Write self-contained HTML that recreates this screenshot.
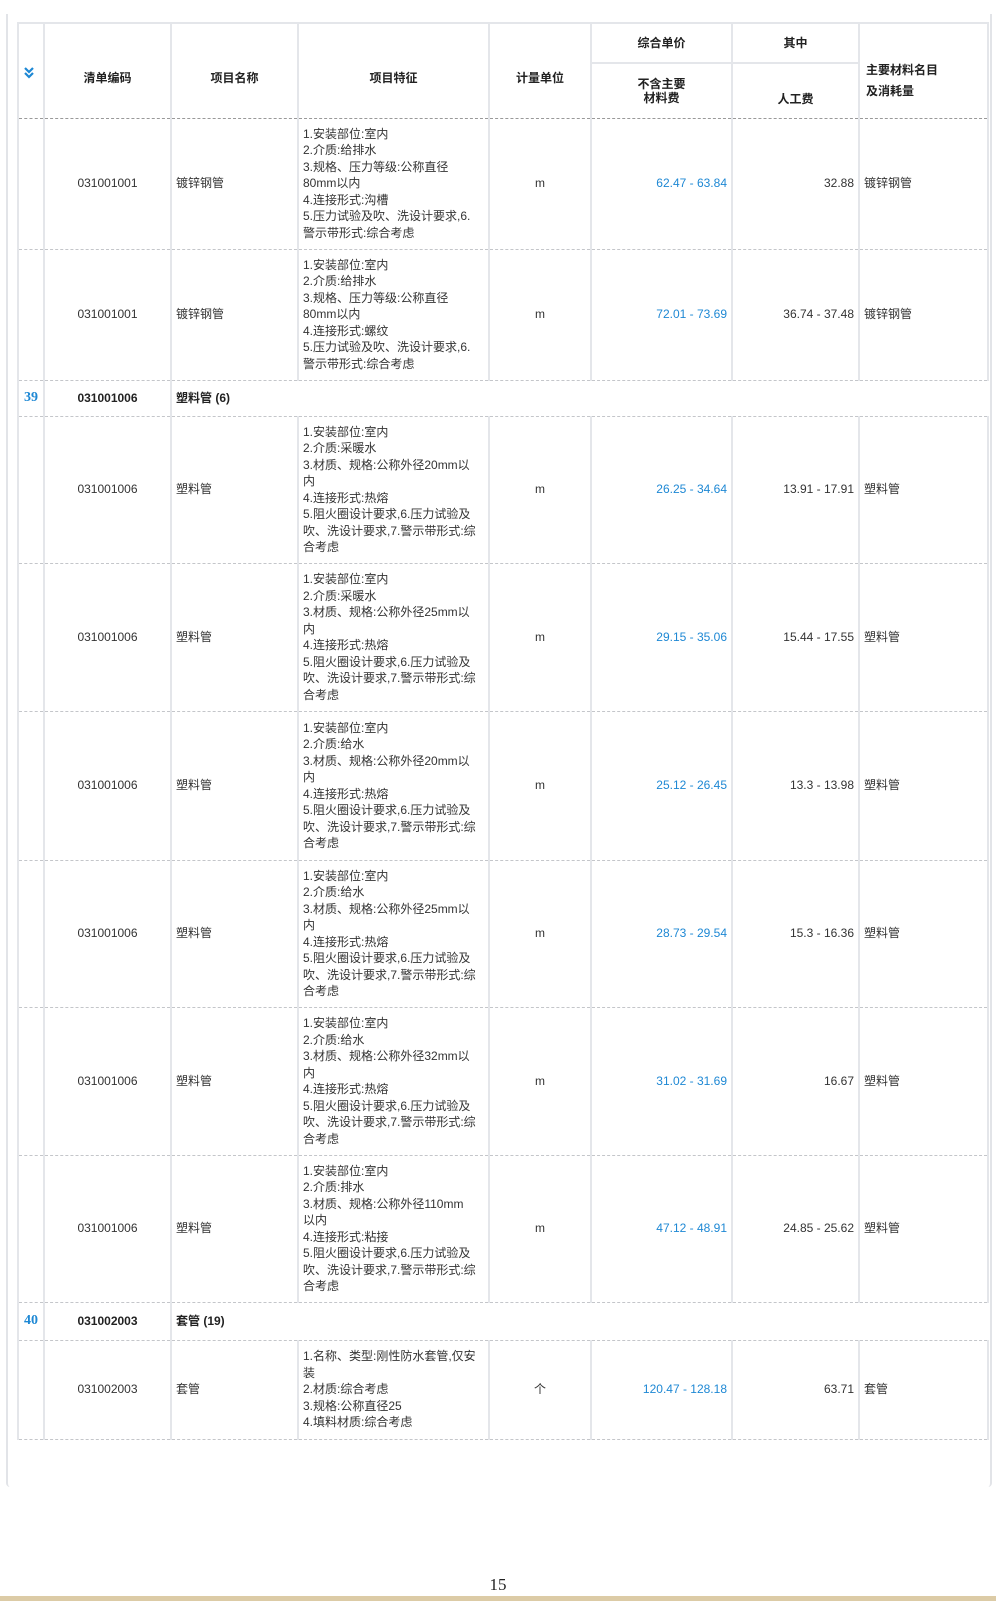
<!DOCTYPE html>
<html><head><meta charset="utf-8"><style>
body{margin:0;width:996px;height:1623px;background:#fff;position:relative;font-family:"Liberation Sans","Noto Sans CJK SC",sans-serif;color:#333;font-size:12px}
.panel{position:absolute;left:6px;top:14px;width:986px;height:1473px;border-left:2px solid #e2e4e8;border-right:2px solid #e2e4e8;border-radius:0 0 4px 4px;box-sizing:border-box}
table{position:absolute;left:17px;top:22px;width:970px;border-collapse:collapse;table-layout:fixed}
td{border-left:2px solid #e4e6ea;border-right:2px solid #e4e6ea;border-top:1px dashed #c4c6ca;border-bottom:1px dashed #c4c6ca;padding:0 4px;vertical-align:middle;line-height:16.5px}
thead td{font-weight:bold;text-align:center;border:2px solid #e4e6ea;color:#222}
thead td.rs{border-bottom:1px dashed #999;padding-top:14px}
thead tr.last td{border-bottom:1px dashed #999}
.c{text-align:center}.r{text-align:right}.b{color:#1e88d4}
.g td{font-weight:bold;color:#222}
.g td.n{color:#1e88d4;font-family:"Liberation Serif",serif;font-size:14px;text-align:center;padding:0}
.pn{position:absolute;top:1575px;left:0;width:996px;text-align:center;font-family:"Liberation Serif",serif;font-size:17px;color:#222}
.bar{position:absolute;top:1596px;left:0;width:996px;height:5px;background:#dccba6}
</style></head><body>
<div class="panel"></div>
<table>
<colgroup><col style="width:26px"><col style="width:127px"><col style="width:127px"><col style="width:191px"><col style="width:102px"><col style="width:141px"><col style="width:127px"><col style="width:129px"></colgroup>
<thead>
<tr style="height:40px"><td rowspan="2" class="rs"></td><td rowspan="2" class="rs">清单编码</td><td rowspan="2" class="rs">项目名称</td><td rowspan="2" class="rs">项目特征</td><td rowspan="2" class="rs">计量单位</td><td>综合单价</td><td>其中</td><td rowspan="2" class="rs" style="text-align:left;line-height:21px;padding-left:6px;padding-top:20px">主要材料名目<br>及消耗量</td></tr>
<tr class="last" style="height:55px"><td style="line-height:14px">不含主要<br>材料费</td><td style="vertical-align:bottom;padding-bottom:10px">人工费</td></tr>
</thead>
<tbody>
<tr style="height:131px"><td></td><td class="c">031001001</td><td>镀锌钢管</td><td>1.安装部位:室内<br>2.介质:给排水<br>3.规格、压力等级:公称直径<br>80mm以内<br>4.连接形式:沟槽<br>5.压力试验及吹、洗设计要求,6.<br>警示带形式:综合考虑</td><td class="c">m</td><td class="r b">62.47 - 63.84</td><td class="r">32.88</td><td>镀锌钢管</td></tr>
<tr style="height:131px"><td></td><td class="c">031001001</td><td>镀锌钢管</td><td>1.安装部位:室内<br>2.介质:给排水<br>3.规格、压力等级:公称直径<br>80mm以内<br>4.连接形式:螺纹<br>5.压力试验及吹、洗设计要求,6.<br>警示带形式:综合考虑</td><td class="c">m</td><td class="r b">72.01 - 73.69</td><td class="r">36.74 - 37.48</td><td>镀锌钢管</td></tr>
<tr class="g" style="height:36px"><td class="n">39</td><td class="c">031001006</td><td colspan="6" style="border-right:none">塑料管 (6)</td></tr>
<tr style="height:147px"><td></td><td class="c">031001006</td><td>塑料管</td><td>1.安装部位:室内<br>2.介质:采暖水<br>3.材质、规格:公称外径20mm以<br>内<br>4.连接形式:热熔<br>5.阻火圈设计要求,6.压力试验及<br>吹、洗设计要求,7.警示带形式:综<br>合考虑</td><td class="c">m</td><td class="r b">26.25 - 34.64</td><td class="r">13.91 - 17.91</td><td>塑料管</td></tr>
<tr style="height:148px"><td></td><td class="c">031001006</td><td>塑料管</td><td>1.安装部位:室内<br>2.介质:采暖水<br>3.材质、规格:公称外径25mm以<br>内<br>4.连接形式:热熔<br>5.阻火圈设计要求,6.压力试验及<br>吹、洗设计要求,7.警示带形式:综<br>合考虑</td><td class="c">m</td><td class="r b">29.15 - 35.06</td><td class="r">15.44 - 17.55</td><td>塑料管</td></tr>
<tr style="height:149px"><td></td><td class="c">031001006</td><td>塑料管</td><td>1.安装部位:室内<br>2.介质:给水<br>3.材质、规格:公称外径20mm以<br>内<br>4.连接形式:热熔<br>5.阻火圈设计要求,6.压力试验及<br>吹、洗设计要求,7.警示带形式:综<br>合考虑</td><td class="c">m</td><td class="r b">25.12 - 26.45</td><td class="r">13.3 - 13.98</td><td>塑料管</td></tr>
<tr style="height:147px"><td></td><td class="c">031001006</td><td>塑料管</td><td>1.安装部位:室内<br>2.介质:给水<br>3.材质、规格:公称外径25mm以<br>内<br>4.连接形式:热熔<br>5.阻火圈设计要求,6.压力试验及<br>吹、洗设计要求,7.警示带形式:综<br>合考虑</td><td class="c">m</td><td class="r b">28.73 - 29.54</td><td class="r">15.3 - 16.36</td><td>塑料管</td></tr>
<tr style="height:148px"><td></td><td class="c">031001006</td><td>塑料管</td><td>1.安装部位:室内<br>2.介质:给水<br>3.材质、规格:公称外径32mm以<br>内<br>4.连接形式:热熔<br>5.阻火圈设计要求,6.压力试验及<br>吹、洗设计要求,7.警示带形式:综<br>合考虑</td><td class="c">m</td><td class="r b">31.02 - 31.69</td><td class="r">16.67</td><td>塑料管</td></tr>
<tr style="height:147px"><td></td><td class="c">031001006</td><td>塑料管</td><td>1.安装部位:室内<br>2.介质:排水<br>3.材质、规格:公称外径110mm<br>以内<br>4.连接形式:粘接<br>5.阻火圈设计要求,6.压力试验及<br>吹、洗设计要求,7.警示带形式:综<br>合考虑</td><td class="c">m</td><td class="r b">47.12 - 48.91</td><td class="r">24.85 - 25.62</td><td>塑料管</td></tr>
<tr class="g" style="height:38px"><td class="n">40</td><td class="c">031002003</td><td colspan="6" style="border-right:none">套管 (19)</td></tr>
<tr style="height:99px"><td></td><td class="c">031002003</td><td>套管</td><td>1.名称、类型:刚性防水套管,仅安<br>装<br>2.材质:综合考虑<br>3.规格:公称直径25<br>4.填料材质:综合考虑</td><td class="c">个</td><td class="r b">120.47 - 128.18</td><td class="r">63.71</td><td>套管</td></tr>
</tbody></table>
<svg style="position:absolute;left:23px;top:67px" width="12" height="12" viewBox="0 0 12 12"><path d="M2 1l4 4 4-4M2 6l4 4 4-4" fill="none" stroke="#1e88d4" stroke-width="2.2"/></svg>
<div class="pn">15</div>
<div class="bar"></div>
</body></html>
